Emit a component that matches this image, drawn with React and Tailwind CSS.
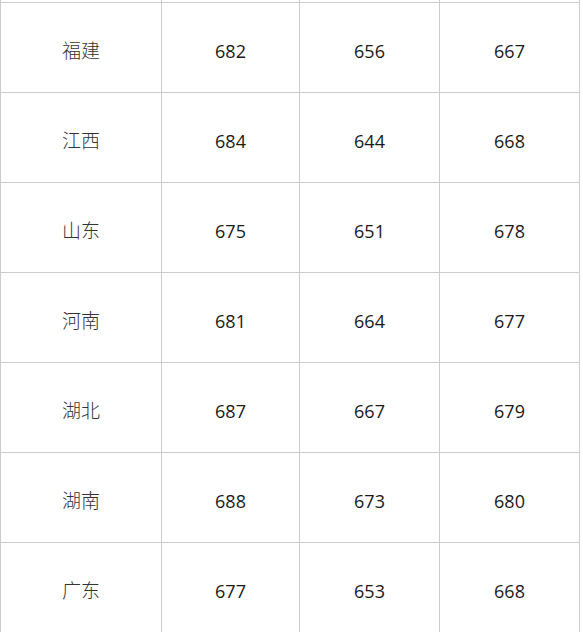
import React from "react";

const rows = [
  ["福建", "682", "656", "667"],
  ["江西", "684", "644", "668"],
  ["山东", "675", "651", "678"],
  ["河南", "681", "664", "677"],
  ["湖北", "687", "667", "679"],
  ["湖南", "688", "673", "680"],
  ["广东", "677", "653", "668"],
];

export default function App() {
  return (
    <div
      className="w-[583px] h-[632px] overflow-hidden bg-white text-[#1a1a1a] text-[18px]"
      style={{ fontFamily: '"Open Sans", "Noto Sans CJK SC", sans-serif' }}
    >
      <div className="grid grid-cols-[161px_138px_140px_140px] w-max border-l border-[#cccccc]">
        {[0, 1, 2, 3].map((i) => (
          <div key={i} className="h-[2px] border-r border-[#cccccc]" />
        ))}
        {rows.map((row) =>
          row.map((cell, i) => (
            <div
              key={row[0] + i}
              className={
                "h-[90px] border-t border-r border-[#cccccc] flex items-center justify-center pt-[8px] " +
                (i === 0 ? "font-light text-[19px] text-[#333]" : "")
              }
            >
              {cell}
            </div>
          ))
        )}
      </div>
    </div>
  );
}
